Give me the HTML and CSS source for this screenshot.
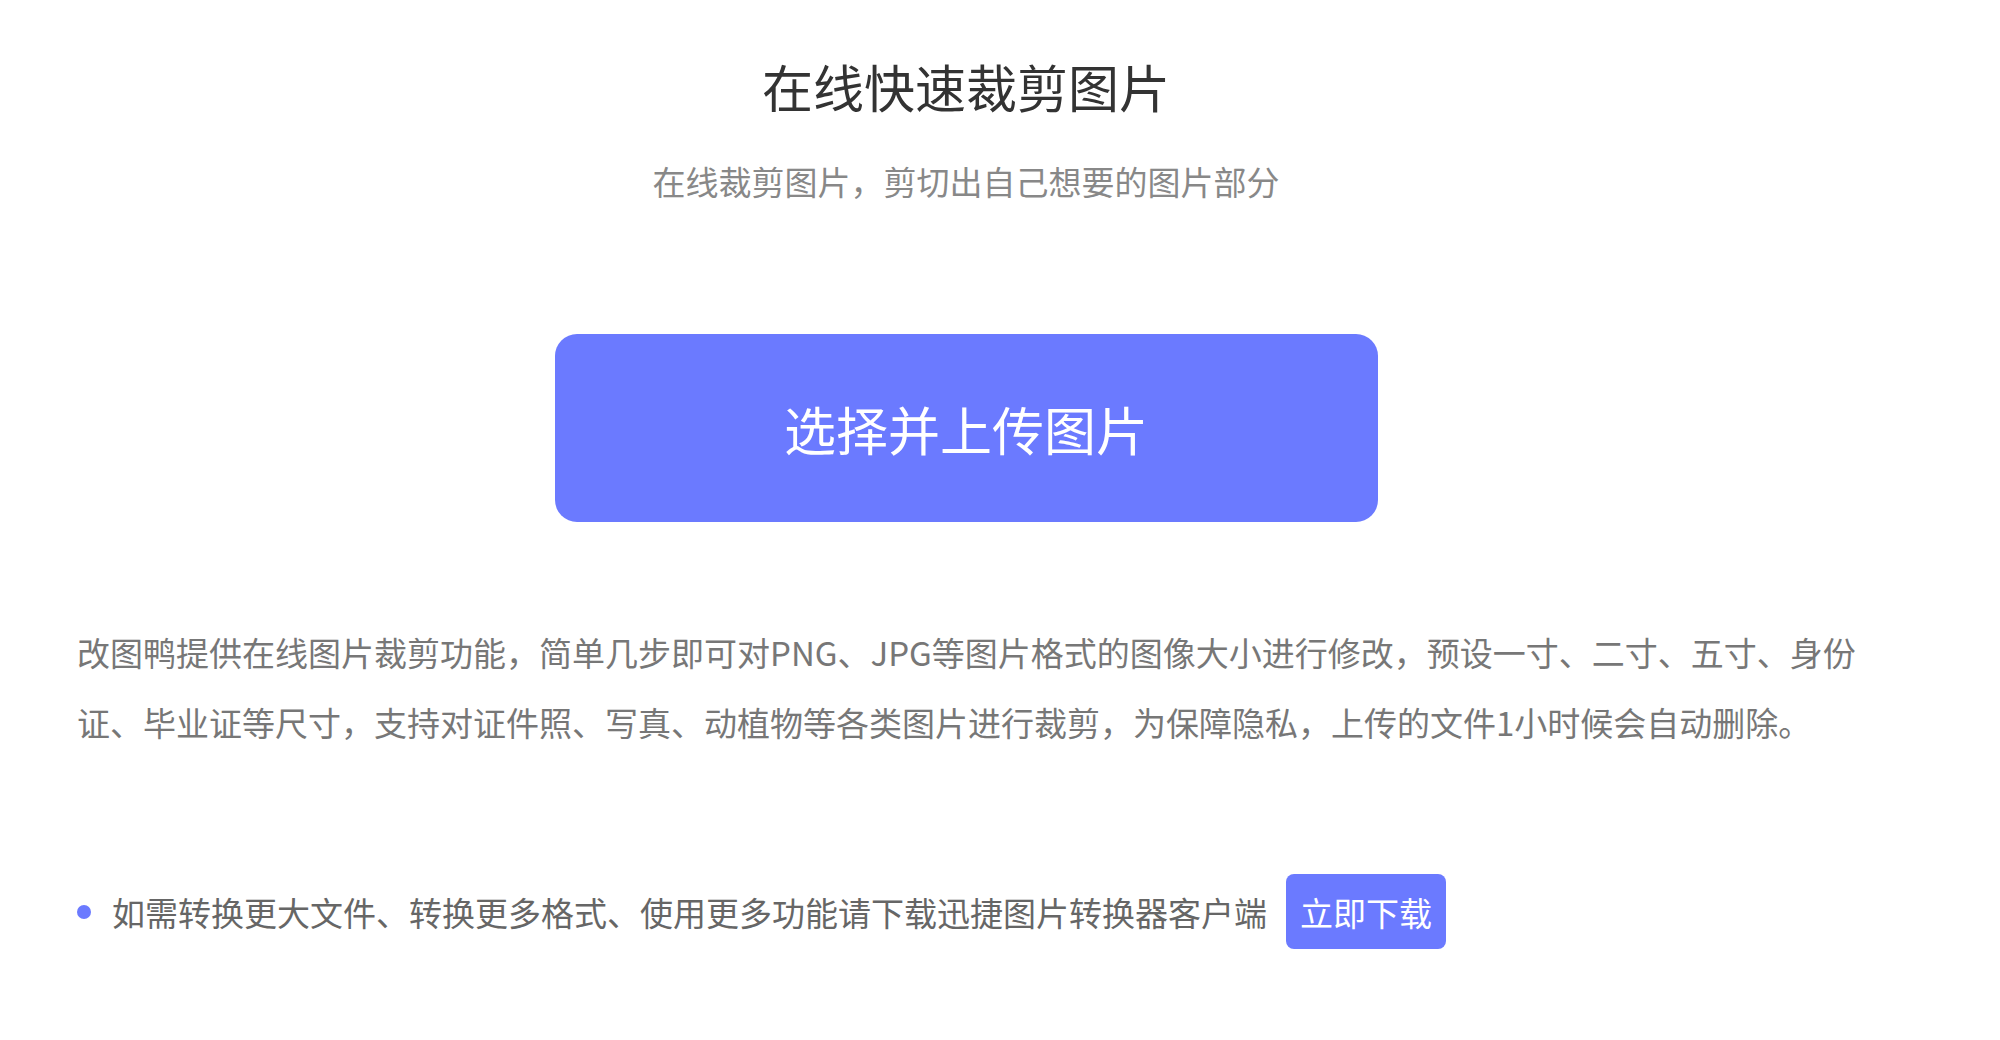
FILE: index.html
```html
<!DOCTYPE html>
<html lang="zh-CN">
<head>
    <meta charset="UTF-8">
    <meta name="viewport" content="width=device-width, initial-scale=1.0">
    <title>在线快速裁剪图片</title>
    <link rel="stylesheet" href="styles.css">
</head>
<body>
    <div class="page">
        <h1 class="title">在线快速裁剪图片</h1>
        <p class="subtitle">在线裁剪图片，剪切出自己想要的图片部分</p>

        <div class="upload">
            <button type="button" class="upload-btn">选择并上传图片</button>
        </div>

        <p class="intro">改图鸭提供在线图片裁剪功能，简单几步即可对PNG、JPG等图片格式的图像大小进行修改，预设一寸、二寸、五寸、身份证、毕业证等尺寸，支持对证件照、写真、动植物等各类图片进行裁剪，为保障隐私，上传的文件1小时候会自动删除。</p>

        <div class="tip">
            <span class="dot"></span>
            <span class="tip-text">如需转换更大文件、转换更多格式、使用更多功能请下载迅捷图片转换器客户端</span>
            <a href="#" class="download-btn">立即下载</a>
            <div class="tip-popup"></div>
        </div>
    </div>
</body>
</html>
```

FILE: styles.css
```css
body {
    margin: 0;
    padding: 0;
    background-color: #fff;
    font-family: "Noto Sans CJK SC", "Microsoft YaHei", sans-serif;
}

.page {
    width: 1778px;
    margin-left: 77px;
}

.title {
    margin: 51px 0 0;
    font-size: 51px;
    font-weight: normal;
    line-height: 70px;
    text-align: center;
    color: #333;
}

.subtitle {
    margin: 35px 0 0;
    font-size: 33px;
    line-height: 50px;
    text-align: center;
    color: #888;
}

.upload {
    display: flex;
    justify-content: center;
    margin-top: 128px;
}

.upload-btn {
    width: 823px;
    height: 188px;
    border: none;
    border-radius: 22px;
    background-color: #6b7aff;
    color: #fff;
    font-family: inherit;
    font-size: 52px;
    cursor: pointer;
}

.intro {
    width: 1810px;
    margin: 95px 0 0;
    font-size: 33px;
    line-height: 70px;
    color: #777;
}

.tip {
    position: relative;
    display: flex;
    align-items: center;
    height: 75px;
    margin-top: 117px;
}

.dot {
    width: 14px;
    height: 14px;
    border-radius: 50%;
    background-color: #6b7aff;
    margin-right: 21px;
}

.tip-text {
    font-size: 33px;
    color: #666;
}

.download-btn {
    display: flex;
    align-items: center;
    justify-content: center;
    width: 160px;
    height: 75px;
    margin-left: 19px;
    border-radius: 8px;
    background-color: #6b7aff;
    color: #fff;
    font-size: 33px;
    text-decoration: none;
}

.tip-popup {
    position: absolute;
    left: 873px;
    top: 93px;
    width: 100px;
    height: 31px;
    background-color: #fffdf2;
}
```
